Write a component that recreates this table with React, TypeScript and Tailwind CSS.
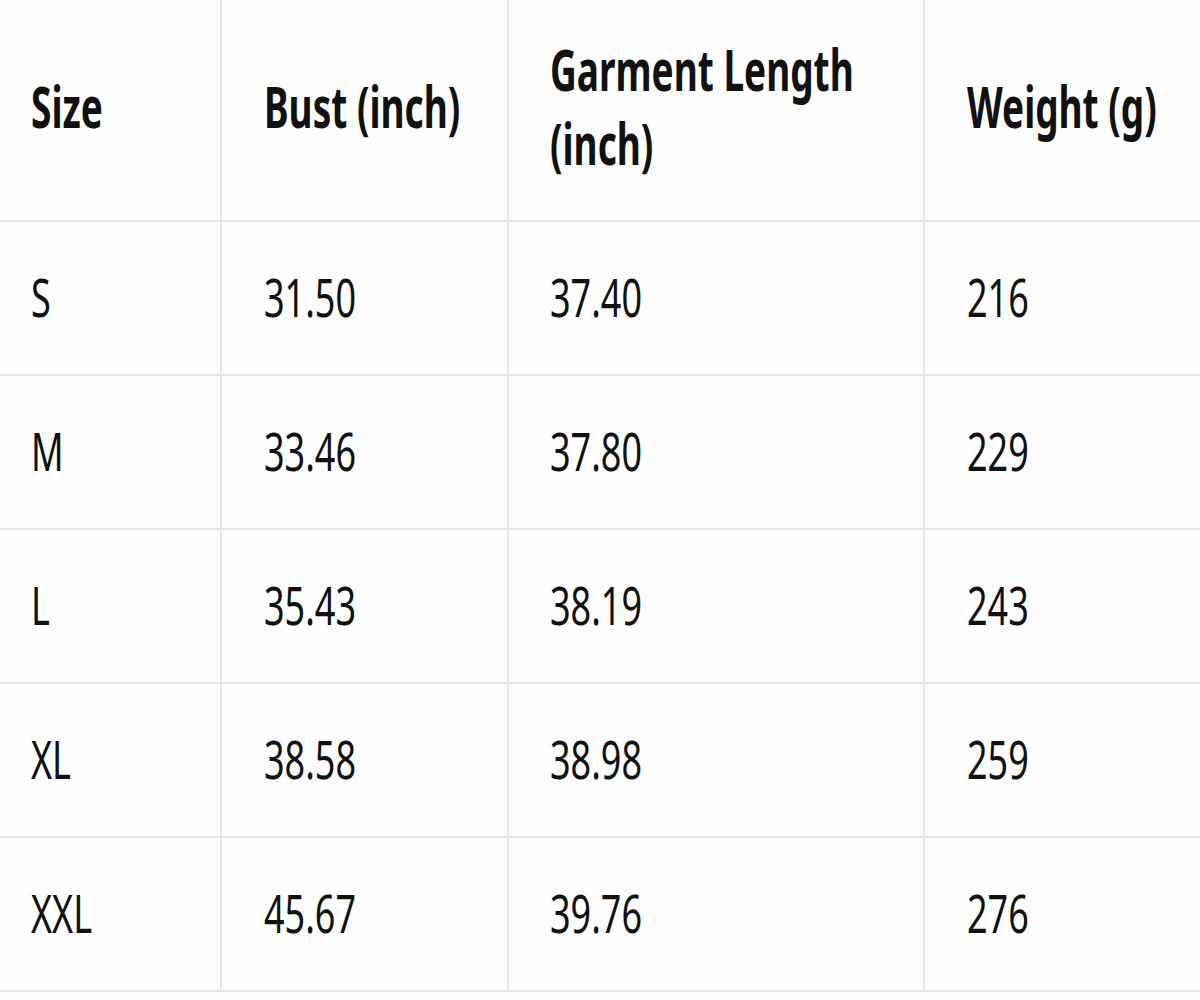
import React from "react";

const headers = ["Size", "Bust (inch)", "Garment Length\n(inch)", "Weight (g)"];
const rows = [
  ["S", "31.50", "37.40", "216"],
  ["M", "33.46", "37.80", "229"],
  ["L", "35.43", "38.19", "243"],
  ["XL", "38.58", "38.98", "259"],
  ["XXL", "45.67", "39.76", "276"],
];

const colPad = ["pl-[31px]", "pl-[42px]", "pl-[41px]", "pl-[42px]"];
const colBorder = ["border-r-2", "border-r-2", "border-r-2", "border-r-0"];

export default function App() {
  return (
    <div
      className="w-[1200px] h-[1000px] bg-[#fdfdfd] text-[#111111] overflow-hidden"
      style={{ fontFamily: '"Noto Sans", "Open Sans", sans-serif' }}
    >
      <div className="grid grid-cols-[222px_287px_416px_275px]">
        {headers.map((h, i) => (
          <div
            key={h}
            className={`h-[222px] flex items-center border-b-2 border-[#e6e6e6] ${colBorder[i]} ${colPad[i]}`}
          >
            <span className="inline-block origin-center scale-y-[1.55] text-[37px] leading-[48px] font-bold tracking-[0px] whitespace-pre-line -mt-[8px]">
              {h.split("\n").map((line, j) => (
                <React.Fragment key={j}>
                  {j > 0 && <br />}
                  {line}
                </React.Fragment>
              ))}
            </span>
          </div>
        ))}
        {rows.map((r, ri) =>
          r.map((c, ci) => (
            <div
              key={`${ri}-${ci}`}
              className={`h-[154px] flex items-center border-b-2 border-[#e6e6e6] ${colBorder[ci]} ${colPad[ci]}`}
            >
              <span className="inline-block origin-center scale-y-[1.45] text-[36px] leading-[40px] tracking-[0px]">
                {c}
              </span>
            </div>
          ))
        )}
      </div>
    </div>
  );
}
